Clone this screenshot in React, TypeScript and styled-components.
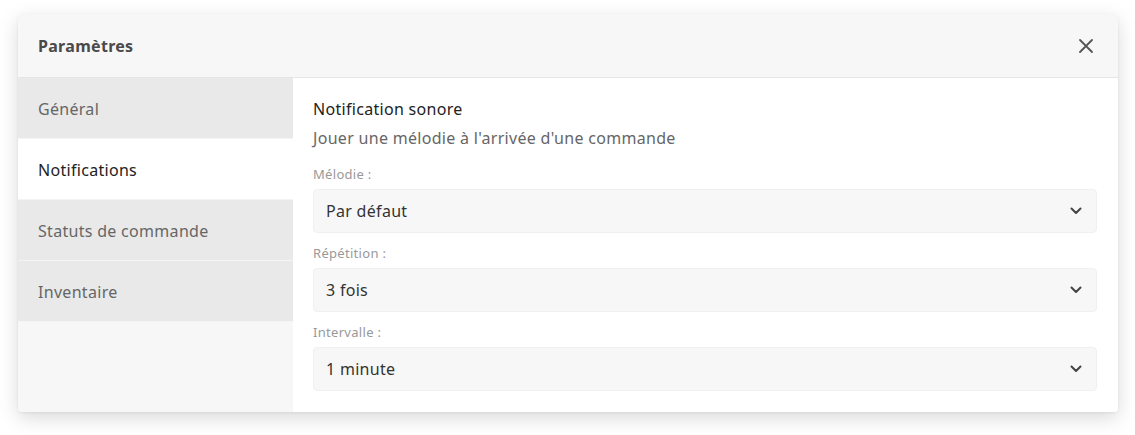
import React from "react";
import styled, { createGlobalStyle } from "styled-components";

const Global = createGlobalStyle`
  html, body { margin: 0; padding: 0; background: #ffffff; }
  body { font-family: "Noto Sans", "Open Sans", sans-serif; letter-spacing: 0.3px; }
  * { box-sizing: border-box; }
`;

const Page = styled.div`
  padding: 14px 17px 24px 18px;
`;

const Modal = styled.div`
  width: 1100px;
  background: #f7f7f7;
  border-radius: 4px;
  box-shadow: 0 6px 20px rgba(0, 0, 0, 0.15), 0 1px 3px rgba(0, 0, 0, 0.06);
  overflow: hidden;
`;

const Header = styled.div`
  height: 64px;
  display: flex;
  align-items: center;
  justify-content: space-between;
  padding: 0 22px 0 20px;
  border-bottom: 1px solid #e6e6e6;
  background: #f7f7f7;
`;

const Title = styled.h1`
  margin: 0;
  font-size: 16px;
  font-weight: 700;
  color: #4a4a4a;
`;

const CloseButton = styled.button`
  border: 0;
  background: transparent;
  padding: 0;
  width: 20px;
  height: 20px;
  display: flex;
  align-items: center;
  justify-content: center;
  color: #555;
  cursor: pointer;
`;

const Body = styled.div`
  display: flex;
`;

const Sidebar = styled.nav`
  width: 275px;
  flex-shrink: 0;
  display: flex;
  flex-direction: column;
  background: #f7f7f7;
`;

const NavItem = styled.div<{ $active?: boolean }>`
  height: 61px;
  display: flex;
  align-items: center;
  padding: 1px 0 0 20px;
  font-size: 16px;
  background: ${(p) => (p.$active ? "#ffffff" : "#e9e9e9")};
  color: ${(p) => (p.$active ? "#222222" : "#666666")};
  border-bottom: 1px solid #f4f4f4;
`;

const Content = styled.section`
  flex: 1;
  background: #ffffff;
  padding: 19px 21px 21px 20px;
`;

const SectionTitle = styled.div`
  font-size: 16px;
  color: #222;
  line-height: 24px;
`;

const SectionDesc = styled.div`
  font-size: 16px;
  color: #666;
  line-height: 24px;
  margin-top: 5px;
`;

const Field = styled.div`
  margin-top: 10px;
  &:first-of-type { margin-top: 14px; }
`;

const Label = styled.div`
  font-size: 13px;
  color: #999;
  line-height: 20px;
  margin-bottom: 5px;
`;

const Select = styled.div`
  height: 44px;
  display: flex;
  align-items: center;
  justify-content: space-between;
  padding: 0 14px 0 12px;
  background: #f7f7f7;
  border: 1px solid #f0f0f0;
  border-radius: 4px;
  font-size: 16px;
  color: #333;
`;

const Chevron = () => (
  <svg width="12" height="8" viewBox="0 0 12 8" fill="none">
    <path d="M1.5 1.5 6 6l4.5-4.5" stroke="#444" strokeWidth="2" strokeLinecap="round" strokeLinejoin="round" />
  </svg>
);

const Fields = styled.div``;

const fields = [
  { label: "Mélodie :", value: "Par défaut" },
  { label: "Répétition :", value: "3 fois" },
  { label: "Intervalle :", value: "1 minute" },
];

const nav = ["Général", "Notifications", "Statuts de commande", "Inventaire"];

export default function App() {
  return (
    <>
      <Global />
      <Page>
        <Modal>
          <Header>
            <Title>Paramètres</Title>
            <CloseButton aria-label="Fermer">
              <svg width="16" height="16" viewBox="0 0 16 16">
                <path d="M2 2l12 12M14 2L2 14" stroke="#555" strokeWidth="1.8" strokeLinecap="round" />
              </svg>
            </CloseButton>
          </Header>
          <Body>
            <Sidebar>
              {nav.map((n) => (
                <NavItem key={n} $active={n === "Notifications"}>
                  {n}
                </NavItem>
              ))}
            </Sidebar>
            <Content>
              <SectionTitle>Notification sonore</SectionTitle>
              <SectionDesc>Jouer une mélodie à l'arrivée d'une commande</SectionDesc>
              <Fields>
                {fields.map((f) => (
                  <Field key={f.label}>
                    <Label>{f.label}</Label>
                    <Select>
                      <span>{f.value}</span>
                      <Chevron />
                    </Select>
                  </Field>
                ))}
              </Fields>
            </Content>
          </Body>
        </Modal>
      </Page>
    </>
  );
}
